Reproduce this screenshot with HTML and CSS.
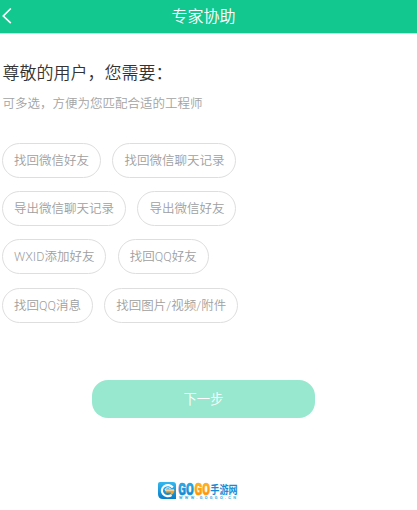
FILE: index.html
```html
<!DOCTYPE html>
<html lang="zh-CN">
<head>
	<meta charset="UTF-8">
	<meta name="viewport" content="width=device-width, initial-scale=1.0">
	<title>专家协助</title>
	<link rel="stylesheet" href="styles.css">
</head>
<body>
	<div class="header">
		<svg class="back" width="12" height="18" viewBox="0 0 12 18">
			<path d="M10.8 1.5 L3.3 9 L10.8 16.2" />
		</svg>
		<div class="title">专家协助</div>
	</div>
	<div class="content">
		<div class="question">尊敬的用户，您需要：</div>
		<div class="hint">可多选，方便为您匹配合适的工程师</div>
		<div class="options">
			<div class="row">
				<div class="option">找回微信好友</div>
				<div class="option">找回微信聊天记录</div>
			</div>
			<div class="row">
				<div class="option">导出微信聊天记录</div>
				<div class="option">导出微信好友</div>
			</div>
			<div class="row">
				<div class="option">WXID添加好友</div>
				<div class="option">找回QQ好友</div>
			</div>
			<div class="row">
				<div class="option">找回QQ消息</div>
				<div class="option">找回图片/视频/附件</div>
			</div>
		</div>
	</div>
	<div class="next">下一步</div>
	<svg class="logo" width="82" height="20" viewBox="0 0 82 20">
		<defs>
			<linearGradient id="blue" x1="0" y1="0" x2="0" y2="1">
				<stop offset="0" stop-color="#35b8ee" />
				<stop offset="1" stop-color="#087bc8" />
			</linearGradient>
			<linearGradient id="orange" x1="0" y1="0" x2="0" y2="1">
				<stop offset="0" stop-color="#ffc21c" />
				<stop offset="1" stop-color="#ff8500" />
			</linearGradient>
		</defs>
		<path d="M3 1 H16 Q19 1 19 4 V18 H6 Q1 18 1 13 V3 Q1 1 3 1 Z" fill="url(#blue)" />
		<path d="M15.8 6.5 A6 5.5 0 1 0 14.5 14" fill="none" stroke="#fff" stroke-width="2.2" />
		<path d="M8 9 H17.5 Q17 13 13.5 14.5 L14 11.5 H9 Z" fill="#ffa11b" />
		<path d="M13.5 7.5 Q9 5.5 8 9 H17" fill="none" stroke="#fff" stroke-width="1" />
		<text class="go" x="21.3" y="13.8" textLength="15.4" lengthAdjust="spacingAndGlyphs" fill="url(#blue)" stroke="#168fd7">GO</text>
		<text class="go" x="37.5" y="13.8" textLength="15.4" lengthAdjust="spacingAndGlyphs" fill="url(#orange)" stroke="#ff9d0b">GO</text>
		<text class="site" x="53.3" y="12.7" textLength="27.3" lengthAdjust="spacingAndGlyphs">手游网</text>
		<text class="url" x="22" y="18.2" textLength="57">WWW.GOGGO.CN</text>
	</svg>
</body>
</html>
```

FILE: styles.css
```css
body{
	margin: 0;
	height: 510px;
	overflow: hidden;
	display: flex;
	flex-direction: column;
	background-color: #fff;
	font-family: Roboto, "Noto Sans CJK SC", sans-serif;
	font-weight: 350;
	cursor: default;
}
.header{
	display: flex;
	align-items: center;
	height: 33px;
	background-color: #13c88f;
	border-bottom: solid 1px #b5eddb;
	color: #fff;
}
.back{
	width: 12px;
	margin-bottom: 2px;
	fill: none;
	stroke: #fff;
	stroke-width: 1.7;
}
.title{
	flex: 1;
	padding-right: 22px;
	text-align: center;
	font-size: 16px;
	line-height: 32px;
}
.content{
	padding: 26px 2px 0;
}
.question{
	padding-left: 0.5px;
	font-size: 17px;
	line-height: 26px;
	color: #333;
}
.hint{
	margin-top: 8px;
	padding-left: 0.5px;
	font-size: 12.5px;
	line-height: 20px;
	color: #a3a3a3;
}
.options{
	display: grid;
	grid-gap: 13.3px;
	margin-top: 28.8px;
}
.row{
	display: flex;
	gap: 11.4px;
}
.option{
	box-sizing: border-box;
	height: 35px;
	padding: 0 11px;
	border: solid 1px #dedede;
	border-radius: 18px;
	font-size: 12.5px;
	line-height: 33.4px;
	color: #a0a0a0;
	white-space: nowrap;
}
.next{
	width: 223px;
	height: 38px;
	margin: 57.3px 0 0 92px;
	border-radius: 16px;
	background-color: #97e8cf;
	color: #fff;
	font-size: 13.3px;
	line-height: 39.5px;
	text-align: center;
}
.logo{
	overflow: visible;
	margin: 63px 0 0 157px;
}
.go{
	font-family: Roboto, sans-serif;
	font-weight: 900;
	font-size: 16.5px;
	stroke-width: 0.6;
}
.site{
	font-family: "Noto Sans CJK SC", sans-serif;
	font-weight: 700;
	font-size: 11.5px;
	fill: #168bd5;
}
.url{
	font-family: Roboto, sans-serif;
	font-weight: 700;
	font-size: 4px;
	fill: #45aee2;
}
```
